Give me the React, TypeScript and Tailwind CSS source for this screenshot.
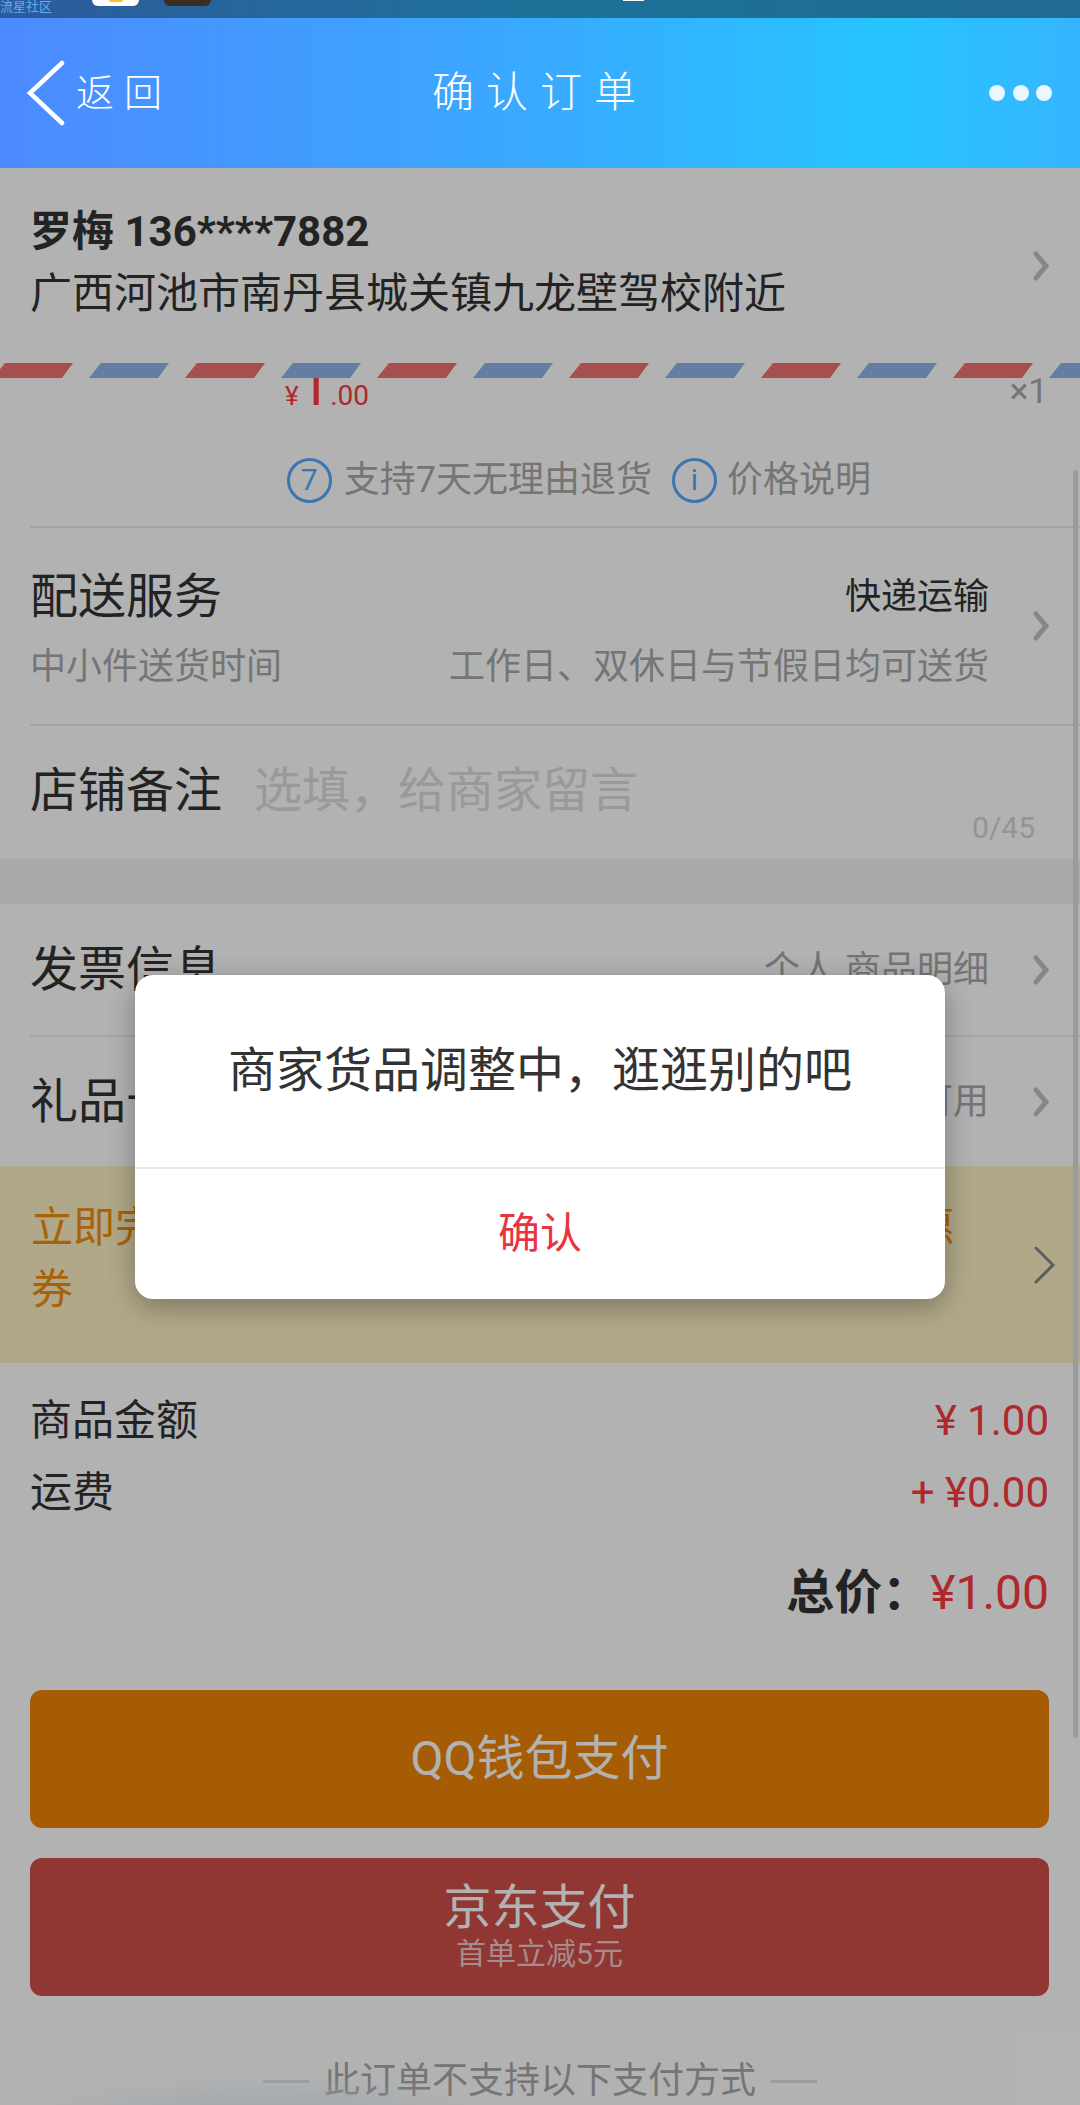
import React from 'react';

function Chevron({ className = '' }: { className?: string }) {
  return (
    <svg viewBox="0 0 18 30" className={`h-[30px] w-[18px] shrink-0 stroke-[#c2c2c2] ${className}`} fill="none" strokeWidth={5} strokeLinecap="round">
      <polyline points="4,3 14,15 4,27" />
    </svg>
  );
}

function CircleBadge({ label }: { label: string }) {
  return (
    <span className="flex h-[45px] w-[45px] shrink-0 items-center justify-center rounded-full border-[3px] border-[#55a8ff] text-[30px] leading-none text-[#55a8ff]">
      {label}
    </span>
  );
}

function Divider() {
  return <div className="ml-[30px] h-[2px] bg-[#ebebeb]" />;
}

// mail-style strip under the address
function AirmailStripe() {
  const stripes = Array.from({ length: 12 }, (_, i) => i);
  return (
    <svg width="1080" height="15" viewBox="0 0 1080 15" className="block">
      {stripes.map((i) => {
        const x = -7 + i * 96;
        const fill = i % 2 === 0 ? '#f07170' : '#8eb4ec';
        return <polygon key={i} points={`${x},15 ${x + 12},0 ${x + 80},0 ${x + 69},15`} fill={fill} />;
      })}
    </svg>
  );
}

function ListRow({ title, value, height }: { title: string; value: string; height: string }) {
  return (
    <div className={`flex items-center pl-[30px] pr-[30px] ${height}`}>
      <span className="flex-1 text-[48px] leading-[60px] text-[#333]">{title}</span>
      <span className="text-[36px] leading-[48px] text-[#a8a8a8]">{value}</span>
      <Chevron className="ml-[43px]" />
    </div>
  );
}

function PriceLine({ label, value }: { label: string; value: string }) {
  return (
    <div className="flex h-[60px] items-center justify-between text-[42px] leading-[60px]">
      <span className="text-[#333]">{label}</span>
      <span className="text-[#f93a3f]">{value}</span>
    </div>
  );
}

export default function App() {
  return (
    <div className="h-[2105px] w-[1080px] overflow-hidden bg-white font-['Roboto','Noto_Sans_CJK_SC',sans-serif]">
      {/* status bar */}
      <div className="flex h-[18px] items-start overflow-hidden bg-gradient-to-r from-[#2d5a9e] via-[#1c7299] to-[#206a94]">
        <span className="w-[92px] text-[13px] leading-[13px] text-[#5ab0f0]">流星社区</span>
        <span className="flex h-[6px] w-[47px] justify-center rounded-b-[6px] bg-white">
          <span className="h-[2px] w-[14px] rounded-b-full bg-[#fbbf24]" />
        </span>
        <span className="ml-[25px] h-[6px] w-[47px] rounded-b-[6px] bg-[#3b2d22]" />
        <span className="ml-[412px] h-px w-[21px] bg-white" />
      </div>

      {/* nav bar */}
      <header className="grid h-[150px] grid-cols-3 items-center bg-[linear-gradient(90deg,#4d8aff_0%,#39aaff_50%,#27c4ff_82%,#35b5ff_100%)] text-white">
        <div className="flex items-center pl-[27px]">
          <svg viewBox="0 0 38 66" className="h-[66px] w-[38px]" fill="none" stroke="white" strokeWidth="4.5" strokeLinecap="round">
            <polyline points="35,3 3,33 35,63" />
          </svg>
          <span className="ml-[11px] text-[38px] leading-none font-light tracking-[10px]">返回</span>
        </div>
        <div className="text-center text-[42px] leading-none font-light tracking-[12px]">确认订单</div>
        <div className="flex justify-end gap-[7.5px] pr-[28px]">
          <span className="h-[16px] w-[16px] rounded-full bg-[#eaf7ff]" />
          <span className="h-[16px] w-[16px] rounded-full bg-[#eaf7ff]" />
          <span className="h-[16px] w-[16px] rounded-full bg-[#eaf7ff]" />
        </div>
      </header>

      <main className="relative h-[1937px] overflow-hidden">
        {/* address */}
        <section className="flex h-[195px] items-center pl-[30px] pr-[30px]">
          <div className="h-full flex-1 pt-[33px] text-[42px] leading-[62px] text-[#333]">
            <div className="font-bold">罗梅 136****7882</div>
            <div>广西河池市南丹县城关镇九龙壁驾校附近</div>
          </div>
          <Chevron />
        </section>
        <AirmailStripe />

        {/* product row, scrolled mostly out of view */}
        <div className="flex h-[36px] items-end justify-between overflow-hidden pl-[285px] pr-[32px]">
          <div className="translate-y-[10px] text-[28px] leading-[56px] text-[#f93a3f]">
            <span className="text-[26px]">¥</span>
            <span className="text-[56px]">1</span>
            <span>.00</span>
          </div>
          <span className="text-[35px] leading-[44px] text-[#a8a8a8]">×1</span>
        </div>

        <div className="flex h-[112px] items-center justify-end pt-[20px] pr-[209px] text-[36px] leading-[48px] text-[#a8a8a8]">
          <CircleBadge label="7" />
          <span className="ml-[12px]">支持7天无理由退货</span>
          <span className="ml-[20px]">
            <CircleBadge label="i" />
          </span>
          <span className="ml-[10px]">价格说明</span>
        </div>
        <Divider />

        {/* delivery */}
        <section className="flex h-[196px] items-center pl-[30px] pr-[30px]">
          <div className="flex h-full flex-1 flex-col gap-[10px] pt-[39px]">
            <div className="flex h-[60px] items-center justify-between">
              <span className="text-[48px] text-[#333]">配送服务</span>
              <span className="text-[36px] text-[#333]">快递运输</span>
            </div>
            <div className="flex h-[60px] items-center justify-between text-[36px] text-[#a8a8a8]">
              <span>中小件送货时间</span>
              <span>工作日、双休日与节假日均可送货</span>
            </div>
          </div>
          <Chevron className="ml-[43px]" />
        </section>
        <Divider />

        {/* shop note */}
        <section className="relative flex h-[133px] gap-[32px] pl-[30px] pt-[35px] text-[48px] leading-[60px]">
          <span className="text-[#333]">店铺备注</span>
          <span className="text-[#dcdcdc]">选填，给商家留言</span>
          <span className="absolute bottom-[17px] right-[45px] text-[30px] leading-[28px] text-[#d4d4d4]">0/45</span>
        </section>
        <div className="h-[45px] bg-[#f2f2f2]" />

        <ListRow title="发票信息" value="个人 商品明细" height="h-[131px]" />
        <Divider />
        <ListRow title="礼品卡" value="无可用" height="h-[129px]" />

        {/* promo strip */}
        <section className="flex h-[197px] items-center bg-[#fef1c5] pl-[31px] pr-[25px]">
          <p className="h-full w-[940px] pt-[31px] text-[42px] leading-[62px] text-[#f08f0b]">
            立即完成实名认证，可领取京东支付新人专享优惠券
          </p>
          <svg viewBox="0 0 21 38" className="ml-auto h-[38px] w-[21px]" fill="none" stroke="#858585" strokeWidth="3" strokeLinecap="round">
            <polyline points="2,2 19,19 2,36" />
          </svg>
        </section>

        {/* totals */}
        <section className="pl-[30px] pr-[31px] pt-[28px]">
          <PriceLine label="商品金额" value="¥ 1.00" />
          <div className="mt-[12px]">
            <PriceLine label="运费" value="+ ¥0.00" />
          </div>
          <div className="mt-[40px] flex h-[60px] items-center justify-end text-[48px] leading-[60px]">
            <span className="font-bold text-[#333]">总价：</span>
            <span className="text-[#f93a3f]">¥1.00</span>
          </div>
        </section>

        {/* pay buttons */}
        <section className="mt-[67px] flex flex-col gap-[30px] pl-[30px] pr-[31px]">
          <button className="flex h-[138px] items-center justify-center rounded-[12px] bg-[#ed8406] text-[48px] leading-[60px] text-white">
            QQ钱包支付
          </button>
          <button className="flex h-[138px] flex-col items-center justify-center gap-[6px] rounded-[12px] bg-[#d04f4a] text-white">
            <span className="text-[48px] leading-[48px]">京东支付</span>
            <span className="text-[30px] leading-[32px] text-white/70">首单立减5元</span>
          </button>
        </section>

        <div className="mt-[65px] flex h-[40px] items-center justify-center gap-[15px] text-[36px] leading-[40px] text-[#a8a8a8]">
          <span className="h-[3px] w-[46px] bg-[#e0e0e0]" />
          <span>此订单不支持以下支付方式</span>
          <span className="h-[3px] w-[46px] bg-[#e0e0e0]" />
        </div>

        {/* soft tint showing up from the list below */}
        <div className="absolute bottom-[-50px] left-[20px] h-[80px] w-[480px] bg-[radial-gradient(ellipse_at_center,#e4effa_0%,transparent_70%)]" />

        {/* dim layer and alert */}
        <div className="absolute inset-0 flex items-center justify-center bg-black/30">
          <div className="flex h-[324px] w-[810px] flex-col overflow-hidden rounded-[18px] bg-white shadow-[0_8px_28px_rgba(0,0,0,0.3)]">
            <div className="flex h-[194px] items-center justify-center border-b-2 border-[#e8e8e8] text-[48px] leading-[60px] text-[#333]">
              商家货品调整中，逛逛别的吧
            </div>
            <div className="flex flex-1 items-center justify-center text-[42px] leading-[60px] text-[#e8343f]">确认</div>
          </div>
        </div>

        {/* scrollbar */}
        <div className="absolute right-[2px] top-[302px] h-[1268px] w-[5px] rounded-full bg-[#9a9c9a]" />
      </main>
    </div>
  );
}
